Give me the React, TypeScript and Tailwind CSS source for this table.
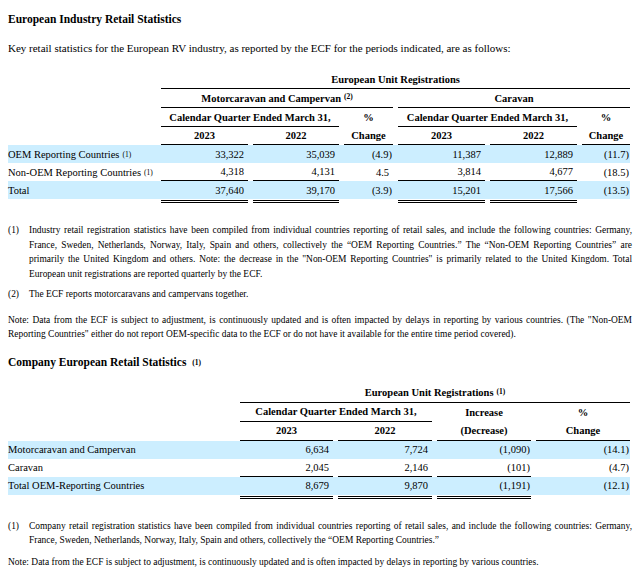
import React from "react";

const serif = "font-['Liberation_Serif','Times_New_Roman',serif]";

const grid1 = "grid grid-cols-[148px_87px_86px_49px_87px_87px_48px] gap-x-[5px]";
const grid2 = "grid grid-cols-[227px_93px_94px_94px_94px] gap-x-[5px]";

// superscript footnote marker
function Sup({ n, bold = false }: { n: string; bold?: boolean }) {
  return (
    <sup className={`text-[7.5px] relative -top-[1px] ml-[3px] ${bold ? "font-bold" : "font-normal"}`}>({n})</sup>
  );
}

// numeric cell, negatives shown in parentheses with the closing paren hanging
function Num({ v }: { v: string }) {
  const neg = v.startsWith("(");
  return (
    <div className="text-right pr-[4px]">
      {neg ? (
        <>
          {v.slice(0, -1)}
          <span className="-mr-[3px]">)</span>
        </>
      ) : (
        v
      )}
    </div>
  );
}

const t1Rows = [
  { label: "OEM Reporting Countries", sup: "1", vals: ["33,322", "35,039", "(4.9)", "11,387", "12,889", "(11.7)"], blue: true },
  { label: "Non-OEM Reporting Countries", sup: "1", vals: ["4,318", "4,131", "4.5", "3,814", "4,677", "(18.5)"], blue: false },
  { label: "Total", sup: "", vals: ["37,640", "39,170", "(3.9)", "15,201", "17,566", "(13.5)"], blue: true },
];

const t2Rows = [
  { label: "Motorcaravan and Campervan", vals: ["6,634", "7,724", "(1,090)", "(14.1)"], blue: true },
  { label: "Caravan", vals: ["2,045", "2,146", "(101)", "(4.7)"], blue: false },
  { label: "Total OEM-Reporting Countries", vals: ["8,679", "9,870", "(1,191)", "(12.1)"], blue: true },
];

export default function App() {
  const hd = "h-[19px] flex items-center justify-center font-bold";
  return (
    <div className={`${serif} bg-white text-black w-[640px] h-[579px] overflow-hidden pl-[8px] pr-[8px] pt-[11px]`}>
      <h2 className="text-[11.5px] leading-[16px] font-bold">European Industry Retail Statistics</h2>
      <p className="text-[11px] leading-[16px] mt-[13px]">
        Key retail statistics for the European RV industry, as reported by the ECF for the periods indicated, are as follows:
      </p>

      {/* Table 1 */}
      <div className="mt-[14px] w-[622px] text-[10.5px] leading-[13px]">
        <div className={grid1}>
          <div />
          <div className={`${hd} col-span-6 border-b border-black`}>European Unit Registrations</div>
        </div>
        <div className={grid1}>
          <div />
          <div className={`${hd} col-span-3 border-b border-black`}>
            Motorcaravan and Campervan <Sup n="2" bold />
          </div>
          <div className={`${hd} col-span-3 border-b border-black`}>Caravan</div>
        </div>
        <div className={grid1}>
          <div />
          <div className={`${hd} col-span-2 border-b border-black`}>Calendar Quarter Ended March 31,</div>
          <div className={hd}>%</div>
          <div className={`${hd} col-span-2 border-b border-black`}>Calendar Quarter Ended March 31,</div>
          <div className={hd}>%</div>
        </div>
        <div className={grid1}>
          <div />
          {["2023", "2022", "Change", "2023", "2022", "Change"].map((h, i) => (
            <div key={i} className="h-[18px] flex items-center justify-center font-bold border-b border-black">
              {h}
            </div>
          ))}
        </div>
        {t1Rows.map((r, ri) => (
          <div key={ri} className={`${grid1} h-[18px] items-center ${r.blue ? "bg-[#cceeff]" : ""}`}>
            <div className="whitespace-nowrap">
              {r.label}
              {r.sup && <Sup n={r.sup} />}
            </div>
            {r.vals.map((v, i) => (
              <div key={i} className={`h-[18px] flex items-center justify-end ${ri === 1 && i !== 2 && i !== 5 ? "border-b border-black" : ""}`}>
                <Num v={v} />
              </div>
            ))}
          </div>
        ))}
        <div className={`${grid1} h-[3px] mt-[1px]`}>
          <div />
          {[0, 1, 2, 3, 4, 5].map((i) => (
            <div key={i} className={i === 2 || i === 5 ? "" : "border-b-[3px] border-double border-black"} />
          ))}
        </div>
      </div>

      {/* Footnotes 1 */}
      <div className="mt-[20px] text-[9.45px] leading-[14.5px]">
        <div className="grid grid-cols-[21px_1fr]">
          <div>(1)</div>
          <p className="text-justify">
            Industry retail registration statistics have been compiled from individual countries reporting of retail sales, and include the
            following countries: Germany, France, Sweden, Netherlands, Norway, Italy, Spain and others, collectively the “OEM Reporting
            Countries.” The “Non-OEM Reporting Countries” are primarily the United Kingdom and others. Note: the decrease in the "Non-OEM
            Reporting Countries" is primarily related to the United Kingdom. Total European unit registrations are reported quarterly by the ECF.
          </p>
        </div>
        <div className="grid grid-cols-[21px_1fr] mt-[6px]">
          <div>(2)</div>
          <p>The ECF reports motorcaravans and campervans together.</p>
        </div>
        <p className="mt-[11px] text-justify">
          Note: Data from the ECF is subject to adjustment, is continuously updated and is often impacted by delays in reporting by various
          countries. (The "Non-OEM Reporting Countries" either do not report OEM-specific data to the ECF or do not have it available for the
          entire time period covered).
        </p>
      </div>

      <h2 className="mt-[12px] text-[11.5px] leading-[16px] font-bold">
        Company European Retail Statistics <Sup n="1" bold />
      </h2>

      {/* Table 2 */}
      <div className="mt-[14px] w-[622px] text-[10.5px] leading-[13px]">
        <div className={grid2}>
          <div />
          <div className={`${hd} col-span-4 border-b border-black`}>
            European Unit Registrations <Sup n="1" bold />
          </div>
        </div>
        <div className={grid2}>
          <div />
          <div className={`${hd} col-span-2 border-b border-black`}>Calendar Quarter Ended March 31,</div>
          <div className={hd}>Increase</div>
          <div className={hd}>%</div>
        </div>
        <div className={grid2}>
          <div />
          {["2023", "2022", "(Decrease)", "Change"].map((h, i) => (
            <div key={i} className="h-[19px] flex items-center justify-center font-bold border-b border-black">
              {h}
            </div>
          ))}
        </div>
        {t2Rows.map((r, ri) => (
          <div key={ri} className={`${grid2} h-[18px] items-center ${r.blue ? "bg-[#cceeff]" : ""}`}>
            <div className="whitespace-nowrap">{r.label}</div>
            {r.vals.map((v, i) => (
              <div key={i} className={`h-[18px] flex items-center justify-end ${ri === 1 && i !== 3 ? "border-b border-black" : ""}`}>
                <Num v={v} />
              </div>
            ))}
          </div>
        ))}
        <div className={`${grid2} h-[3px] mt-[1px]`}>
          <div />
          {[0, 1, 2, 3].map((i) => (
            <div key={i} className={i === 3 ? "" : "border-b-[3px] border-double border-black"} />
          ))}
        </div>
      </div>

      {/* Footnotes 2 */}
      <div className="mt-[20px] text-[9.45px] leading-[14.5px]">
        <div className="grid grid-cols-[21px_1fr]">
          <div>(1)</div>
          <p className="text-justify">
            Company retail registration statistics have been compiled from individual countries reporting of retail sales, and include the
            following countries: Germany, France, Sweden, Netherlands, Norway, Italy, Spain and others, collectively the “OEM Reporting
            Countries.”
          </p>
        </div>
        <p className="mt-[7px]">
          Note: Data from the ECF is subject to adjustment, is continuously updated and is often impacted by delays in reporting by various
          countries.
        </p>
      </div>
    </div>
  );
}
